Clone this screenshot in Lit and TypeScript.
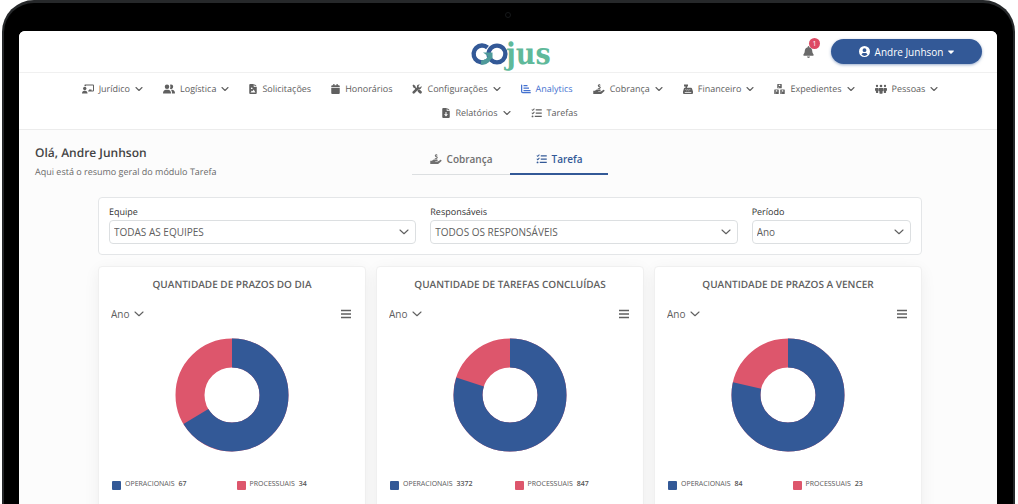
import { LitElement, html, css, svg, type TemplateResult } from "lit";
import { customElement, property } from "lit/decorators.js";

interface Icon {
  w: number;
  h: number;
  body: unknown;
}

/* Every glyph is drawn on a grid 20 units high and filled with currentColor. */
const icons: Record<string, Icon> = {
  teacher: {
    w: 24, h: 20,
    body: svg`<path d="M6 1h16a2 2 0 0 1 2 2v10a2 2 0 0 1-2 2H12.500a7 7 0 0 0-1-2H14v-2h5v2h3V3H8v1.500A5 5 0 0 0 5 4V2a1 1 0 0 1 1-1z"/><circle cx="5.500" cy="9" r="3.300"/><path d="M0 19c0-3.500 2-5.500 4.500-5.500h2c2.500 0 4.500 2 4.500 5.500z"/>`,
  },
  users: {
    w: 24, h: 20,
    body: svg`<circle cx="8" cy="5.500" r="4.500"/><path d="M0 18c0-4 2.500-6.500 6-6.500h4c3.500 0 6 2.500 6 6.500 0 .8-.4 1-1 1H1c-.6 0-1-.2-1-1z"/><path d="M14 1.400a4.500 4.500 0 1 1 0 8.200c1-2.500 1-5.500 0-8.200zM15.500 11.500H18c3.500 0 6 2.500 6 6.500 0 .8-.4 1-1 1h-5.300c.7-3-.2-6-2.200-7.500z"/>`,
  },
  fileImage: {
    w: 15, h: 20,
    body: svg`<path fill-rule="evenodd" d="M2 0h7v6h6v12a2 2 0 0 1-2 2H2a2 2 0 0 1-2-2V2a2 2 0 0 1 2-2zm1.300 8.500a1.700 1.700 0 1 0 3.400 0 1.700 1.700 0 0 0-3.400 0zM2.500 17h10L8.800 11 6.500 14.500 5.300 13z"/><path d="M10.300 0 15 4.700h-4.700z"/>`,
  },
  calendar: {
    w: 17, h: 20,
    body: svg`<path d="M4 0h2.500v2.500h4V0H13v2.500h2a2 2 0 0 1 2 2V6.500H0v-2a2 2 0 0 1 2-2h2zM0 8h17v10a2 2 0 0 1-2 2H2a2 2 0 0 1-2-2z"/>`,
  },
  tools: {
    w: 20, h: 20,
    body: svg`<path d="M1 3 3 1l4 3v2l3.500 3.500-2 2L5 8H3.500z"/><path d="M11 12.500 13 10.500c1.200-.3 2 0 2.800.8L19 14.500c2.500 2.500-1.500 6.500-4 4L11.800 15.300c-.8-.8-1-1.800-.8-2.800z"/><path d="M18.800 4.200 16 7l-2.600-.5L13 4l2.800-2.800C12 0 9 3 10 6.500l-8.500 8.300c-2.400 2.400 1.300 6.100 3.700 3.700l8.300-8.500c3.500 1 6.500-2 5.300-5.800z"/>`,
  },
  chart: {
    w: 20, h: 20,
    body: svg`<path d="M0 2.200a1.200 1.200 0 0 1 2.500 0V15c0 .6.300 1 1 1h15a1.200 1.200 0 0 1 0 2.500H3.500A3.500 3.500 0 0 1 0 15z"/><path d="M5 2h8v2.500H5zM5 7h11v2.500H5zM5 12h14v2.500H5z"/>`,
  },
  handMoney: {
    w: 23, h: 20,
    body: svg`<path d="M11 0h1.800v1.300l1.700.4-.5 1.600c-1.500-.5-2.800-.5-2.900.2 0 1 4 .6 4 3.500 0 1.400-1 2.200-2.300 2.500v1.200H11V9.600c-.9-.1-1.600-.4-2.200-.7l.6-1.600c1.500.8 3.600.8 3.600-.2 0-1.300-4-.7-4-3.600 0-1.100.8-2 2-2.300z"/><path d="M0 13.500h3.500c1.500-1.700 3-2.500 5-2.500h5c2 0 2 3.200 0 3.200H10v1h5l5-3.300c1.800-1 3.500 1.100 2 2.500l-5 4.500c-.9.700-1.800 1-3 1H0z"/>`,
  },
  cash: {
    w: 20, h: 20,
    body: svg`<path fill-rule="evenodd" d="M2 1h8v4H8v2.500h8c1 0 1.700.6 2 1.500L20 15v3a2 2 0 0 1-2 2H2a2 2 0 0 1-2-2v-3l2-6.500c.1-.6.700-1 1.500-1H5V5H2zM5 10v1.500h1.500V10zm4 0v1.500h1.500V10zm4 0v1.500h1.500V10zM7 13v1.500h1.500V13zm4 0v1.500h1.500V13zM3.500 16.700v1.300h13v-1.300z"/>`,
  },
  boxes: {
    w: 22, h: 20,
    body: svg`<path fill-rule="evenodd" d="M7.500 0h7a1 1 0 0 1 1 1v6.500a1 1 0 0 1-1 1h-7a1 1 0 0 1-1-1V1a1 1 0 0 1 1-1zm2 1.500v3.200l1.500-.8 1.500.8V1.500zM8.300 6.200v1h2v-1zM1.500 11h7a1 1 0 0 1 1 1v7a1 1 0 0 1-1 1h-7a1 1 0 0 1-1-1v-7a1 1 0 0 1 1-1zm2 1.500v3.200l1.500-.8 1.500.8v-3.200zM2.300 17.500v1h2v-1zM13.500 11h7a1 1 0 0 1 1 1v7a1 1 0 0 1-1 1h-7a1 1 0 0 1-1-1v-7a1 1 0 0 1 1-1zm2 1.500v3.200l1.500-.8 1.500.8v-3.200zM14.300 17.500v1h2v-1z"/>`,
  },
  people: {
    w: 24, h: 20,
    body: svg`<circle cx="4" cy="4" r="2.300"/><circle cx="12" cy="4" r="2.600"/><circle cx="20" cy="4" r="2.300"/><path d="M1 8h5.500v8.500c0 .8-.5 1.300-1.200 1.300H3c-.7 0-1.200-.5-1.200-1.300V14L0 13V9.500zM8 8h8l1 1.500v4l-1.800 1V18c0 .8-.5 1.300-1.200 1.300h-4c-.7 0-1.200-.5-1.200-1.300v-3.500l-1.800-1v-4zM17.500 8H23l1 1.500V13l-1.800 1v2.500c0 .8-.5 1.300-1.200 1.300h-2.300c-.7 0-1.200-.5-1.200-1.300z"/>`,
  },
  fileDown: {
    w: 15, h: 20,
    body: svg`<path fill-rule="evenodd" d="M2 0h7v6h6v12a2 2 0 0 1-2 2H2a2 2 0 0 1-2-2V2a2 2 0 0 1 2-2zm4.500 8v4.500h-3L7.500 17l4-4.500h-3V8z"/><path d="M10.300 0 15 4.700h-4.700z"/>`,
  },
  tasks: {
    w: 21, h: 20,
    body: svg`<path d="M9 2.500h12V5H9zM9 9h12v2.500H9zM7 15.500h14V18H7z"/><path d="m.4 3.600 1.300-1.200L3 3.600l2.600-3L7 1.800 3.100 6.200zM.4 10.200 1.700 9 3 10.200l2.600-3L7 8.400l-3.900 4.400z"/><circle cx="2.600" cy="16.800" r="1.900"/>`,
  },
  bell: {
    w: 448, h: 512,
    body: svg`<path d="M224 0c-17.700 0-32 14.300-32 32V51.200C119 66 64 130.600 64 208v18.800c0 47-17.300 92.400-48.500 127.600l-7.400 8.300c-8.400 9.400-10.400 22.900-5.300 34.400S19.400 416 32 416H416c12.600 0 24-7.400 29.200-18.900s3.100-25-5.300-34.400l-7.400-8.300C401.300 319.200 384 273.900 384 226.800V208c0-77.400-55-142-128-156.800V32c0-17.700-14.300-32-32-32zm45.300 493.300c12-12 18.700-28.300 18.700-45.300H160c0 17 6.700 33.300 18.700 45.300s28.300 18.700 45.300 18.700s33.300-6.700 45.300-18.700z"/>`,
  },
  user: {
    w: 20, h: 20,
    body: svg`<path fill-rule="evenodd" d="M10 0a10 10 0 1 1 0 20 10 10 0 0 1 0-20zm0 4a3.500 3.500 0 1 0 0 7 3.500 3.500 0 0 0 0-7zM8.500 12.500c-2 0-3.500 1.200-4 3a8 8 0 0 0 11 0c-.5-1.800-2-3-4-3z"/>`,
  },
  caret: { w: 12, h: 20, body: svg`<path d="M1 7h10c.8 0 1.200.9.600 1.500L6.600 13.600a1 1 0 0 1-1.300 0L.4 8.500C-.2 7.900.2 7 1 7z"/>` },
  chevron: {
    w: 16, h: 20,
    body: svg`<path d="m2 7 6 6 6-6" fill="none" stroke="currentColor" stroke-width="2.200" stroke-linecap="round" stroke-linejoin="round"/>`,
  },
  chevronWide: {
    w: 20, h: 20,
    body: svg`<path d="m2 6 8 7.500L18 6" fill="none" stroke="currentColor" stroke-width="2.200" stroke-linecap="round" stroke-linejoin="round"/>`,
  },
  menu: { w: 20, h: 20, body: svg`<path d="M0 1.500h20v2.800H0zM0 8.600h20v2.800H0zM0 15.700h20v2.800H0z"/>` },
};

const iconStyles = css`
  .icon {
    display: block;
    flex: none;
    fill: currentColor;
  }
`;

function icon(name: string, height = 10): TemplateResult {
  const { w, h, body } = icons[name];
  const width = Math.round((w / h) * height);
  return html`<svg class="icon" width=${width} height=${height} viewBox="0 0 ${w} ${h}" aria-hidden="true">${body}</svg>`;
}

const navItems = [
  { label: "Jurídico", icon: "teacher", menu: true },
  { label: "Logística", icon: "users", menu: true },
  { label: "Solicitações", icon: "fileImage" },
  { label: "Honorários", icon: "calendar" },
  { label: "Configurações", icon: "tools", menu: true },
  { label: "Analytics", icon: "chart", active: true },
  { label: "Cobrança", icon: "handMoney", menu: true },
  { label: "Financeiro", icon: "cash", menu: true },
  { label: "Expedientes", icon: "boxes", menu: true },
  { label: "Pessoas", icon: "people", menu: true },
  { label: "Relatórios", icon: "fileDown", menu: true },
  { label: "Tarefas", icon: "tasks" },
];

const filters = [
  { id: "equipe", label: "Equipe", value: "TODAS AS EQUIPES" },
  { id: "responsaveis", label: "Responsáveis", value: "TODOS OS RESPONSÁVEIS" },
  { id: "periodo", label: "Período", value: "Ano" },
];

const charts = [
  { title: "QUANTIDADE DE PRAZOS DO DIA", operational: 67, procedural: 34 },
  { title: "QUANTIDADE DE TAREFAS CONCLUÍDAS", operational: 3372, procedural: 847 },
  { title: "QUANTIDADE DE PRAZOS A VENCER", operational: 84, procedural: 23 },
];

@customElement("donut-card")
export class DonutCard extends LitElement {
  @property() heading = "";
  @property({ type: Number }) operational = 0;
  @property({ type: Number }) procedural = 0;

  static styles = [
    iconStyles,
    css`
      :host {
        display: block;
        box-sizing: border-box;
        min-width: 0;
        min-height: 264px;
        background: #fff;
        border: 1px solid #f0f0f0;
        border-radius: 4px;
        box-shadow: 0 4px 16px rgba(0, 0, 0, 0.06);
      }
      .title {
        margin: 9px 0 0;
        text-align: center;
        font-size: 10px;
        line-height: 16px;
        font-weight: 600;
        color: #606060;
      }
      .tools {
        display: flex;
        justify-content: space-between;
        align-items: center;
        margin: 14px 14px 16px 12px;
      }
      .period {
        display: grid;
        align-items: center;
        color: #606060;
      }
      .period select {
        grid-area: 1 / 1;
        appearance: none;
        border: 0;
        padding: 0 14px 0 0;
        background: none;
        font: inherit;
        font-size: 10px;
        line-height: 16px;
        color: inherit;
      }
      .period .icon {
        grid-area: 1 / 1;
        justify-self: end;
        pointer-events: none;
      }
      .menu {
        border: 0;
        padding: 0;
        background: none;
        color: #606060;
      }
      .donut {
        display: block;
        width: 114px;
        height: 114px;
        margin: 0 auto;
      }
      .legend {
        display: grid;
        grid-template-columns: 1fr 1fr;
        margin: 25px 4px 0 13px;
        padding: 0;
        list-style: none;
        font-size: 7px;
        line-height: 16px;
        color: #555;
      }
      .entry {
        display: flex;
        align-items: center;
        gap: 4px;
      }
      .swatch {
        width: 9px;
        height: 9px;
        border-radius: 1px;
      }
      .blue {
        background: #335997;
      }
      .red {
        background: #dd566c;
      }
      .count {
        font-weight: 600;
      }
    `,
  ];

  render() {
    const radius = 42;
    const length = 2 * Math.PI * radius;
    const share = (this.operational / (this.operational + this.procedural)) * length;
    return html`
      <h2 class="title">${this.heading}</h2>
      <div class="tools">
        <label class="period">
          <select aria-label="Período"><option>Ano</option></select>
          ${icon("chevronWide")}
        </label>
        <button class="menu" aria-label="Menu">${icon("menu")}</button>
      </div>
      <svg class="donut" viewBox="0 0 114 114" role="img" aria-label=${this.heading}>
        <g fill="none" stroke-width="29" transform="rotate(-90 57 57)">
          <circle cx="57" cy="57" r=${radius} stroke="#dd566c" />
          <circle cx="57" cy="57" r=${radius} stroke="#335997" stroke-dasharray="${share} ${length}" />
        </g>
      </svg>
      <ul class="legend">
        <li class="entry"><span class="swatch blue"></span>OPERACIONAIS <span class="count">${this.operational}</span></li>
        <li class="entry"><span class="swatch red"></span>PROCESSUAIS <span class="count">${this.procedural}</span></li>
      </ul>
    `;
  }
}

@customElement("app-root")
export class AppRoot extends LitElement {
  static styles = [
    iconStyles,
    css`
      :host {
        display: flex;
        height: 100vh;
        overflow: hidden;
        font-family: "Open Sans", "Noto Sans", sans-serif;
        text-rendering: geometricPrecision;
        background: #fff;
      }
      .device {
        display: flex;
        flex-direction: column;
        flex: 1;
        min-width: 0;
        margin: 0 3px 0 2px;
        border: solid #26282a;
        border-width: 3px 2px 0;
        border-radius: 32px 32px 0 0;
        background: #000;
        padding: 0 16px 0 15px;
      }
      .bezel {
        display: flex;
        justify-content: center;
        align-items: center;
        height: 28px;
        padding-bottom: 4px;
        box-sizing: border-box;
        flex: none;
      }
      .camera {
        width: 4px;
        height: 4px;
        border: 1px solid #16181a;
        border-radius: 50%;
      }
      .screen {
        flex: 1;
        min-height: 0;
        overflow: hidden;
        border-radius: 6px 6px 0 0;
        background: #fcfcfc;
      }
      .header {
        display: grid;
        grid-template-columns: 1fr auto 1fr;
        align-items: center;
        height: 41px;
        padding: 0 15px 0 19px;
        background: #fff;
        border-bottom: 1px solid #f0f0f0;
      }
      .logo {
        grid-column: 2;
        display: block;
      }
      .jus {
        font-family: "DejaVu Serif Condensed", "DejaVu Serif", serif;
        font-weight: 700;
        font-size: 30px;
        fill: #5fb99a;
      }
      .account {
        display: flex;
        justify-content: flex-end;
        align-items: center;
        gap: 17px;
      }
      .bell {
        position: relative;
        border: 0;
        padding: 0;
        background: none;
        color: #6a6a6a;
      }
      .badge {
        position: absolute;
        left: 6px;
        bottom: 9px;
        width: 11px;
        height: 11px;
        border-radius: 50%;
        background: #dd4a64;
        color: #fff;
        font-family: "Open Sans", sans-serif;
        font-size: 7px;
        line-height: 11px;
        text-align: center;
      }
      .profile {
        display: flex;
        align-items: center;
        justify-content: center;
        gap: 5px;
        width: 151px;
        height: 25px;
        border: 0;
        border-radius: 13px;
        background: #335997;
        box-shadow: 0 1px 3px rgba(51, 89, 151, 0.5);
        color: #fff;
        font: inherit;
        font-size: 10px;
      }
      .nav {
        display: flex;
        flex-wrap: wrap;
        justify-content: center;
        column-gap: 20px;
        row-gap: 8px;
        padding: 8px 20px 8px 24px;
        background: #fff;
        border-bottom: 1px solid #ececec;
      }
      .link {
        display: flex;
        align-items: center;
        gap: 5px;
        font-size: 9px;
        line-height: 16px;
        color: #606060;
        text-decoration: none;
      }
      .link.active {
        color: #4472d0;
      }
      .intro {
        display: grid;
        grid-template-columns: 1fr auto 1fr;
        padding: 14px 12px 17px 16px;
      }
      .hello {
        margin: 0;
        font-size: 12px;
        line-height: 18px;
        font-weight: 600;
        color: #444;
      }
      .sub {
        margin: 2px 0 0;
        font-size: 9px;
        line-height: 16px;
        color: #6a6a6a;
      }
      .tabs {
        display: flex;
        align-self: start;
      }
      .tab {
        display: flex;
        align-items: center;
        justify-content: center;
        gap: 5px;
        width: 98px;
        height: 31px;
        border: 0;
        border-bottom: 1px solid #dcdfe1;
        padding: 0;
        background: none;
        font: inherit;
        font-size: 10px;
        font-weight: 600;
        color: #707070;
      }
      .tab.active {
        color: #335997;
        border-bottom: 2px solid #335997;
      }
      .content {
        padding: 0 75px 0 79px;
      }
      .filters {
        display: grid;
        grid-template-columns: 27fr 27fr 14fr;
        gap: 14px;
        padding: 6px 10px 10px;
        background: #fff;
        border: 1px solid #e4e6e8;
        border-radius: 4px;
      }
      .name {
        display: block;
        font-size: 9px;
        line-height: 16px;
        color: #333;
      }
      .box {
        display: grid;
        align-items: center;
        color: #606060;
      }
      .box select {
        grid-area: 1 / 1;
        appearance: none;
        width: 100%;
        height: 24px;
        padding: 0 24px 0 4px;
        border: 1px solid #dcdfe1;
        border-radius: 4px;
        background: #fff;
        font: inherit;
        font-size: 10px;
        color: inherit;
      }
      .box .icon {
        grid-area: 1 / 1;
        justify-self: end;
        margin-right: 7px;
        pointer-events: none;
      }
      .cards {
        display: grid;
        grid-template-columns: repeat(3, minmax(0, 1fr));
        gap: 10px;
        margin-top: 11px;
      }
    `,
  ];

  private logo() {
    return html`<svg class="logo" width="82" height="40" viewBox="0 0 82 40" role="img" aria-label="GOjus">
      <g fill="none" stroke-width="4.400">
        <path d="M18.500 15.500A8.400 8.400 0 1 0 17.500 29" stroke="#335997" />
        <circle cx="28" cy="22" r="8.400" stroke="#335997" />
        <path d="M12 30.400c5 .4 8.500-2.400 9-7.400" stroke="#4f9a9a" />
      </g>
      <path d="M14 20.500h9.500v7z" fill="#4f9a9a" />
      <text class="jus" x="37" y="32">jus</text>
    </svg>`;
  }

  render() {
    return html`
      <div class="device">
        <div class="bezel"><span class="camera"></span></div>
        <div class="screen">
          <header class="header">
            ${this.logo()}
            <div class="account">
              <button class="bell" aria-label="Notificações">${icon("bell", 12)}<span class="badge">1</span></button>
              <button class="profile">${icon("user", 11)}<span>Andre Junhson</span>${icon("caret")}</button>
            </div>
          </header>
          <nav class="nav">
            ${navItems.map(
              (item) => html`<a class="link ${item.active ? "active" : ""}" href="#">
                ${icon(item.icon)}<span>${item.label}</span>${item.menu ? icon("chevron") : ""}
              </a>`
            )}
          </nav>
          <section class="intro">
            <div>
              <h1 class="hello">Olá, Andre Junhson</h1>
              <p class="sub">Aqui está o resumo geral do módulo Tarefa</p>
            </div>
            <div class="tabs" role="tablist">
              <button class="tab" role="tab" aria-selected="false">${icon("handMoney")}<span>Cobrança</span></button>
              <button class="tab active" role="tab" aria-selected="true">${icon("tasks")}<span>Tarefa</span></button>
            </div>
          </section>
          <main class="content">
            <form class="filters">
              ${filters.map(
                (f) => html`<div>
                  <label class="name" for=${f.id}>${f.label}</label>
                  <div class="box">
                    <select id=${f.id}><option>${f.value}</option></select>
                    ${icon("chevronWide")}
                  </div>
                </div>`
              )}
            </form>
            <div class="cards">
              ${charts.map(
                (c) => html`<donut-card .heading=${c.title} .operational=${c.operational} .procedural=${c.procedural}></donut-card>`
              )}
            </div>
          </main>
        </div>
      </div>
    `;
  }
}
